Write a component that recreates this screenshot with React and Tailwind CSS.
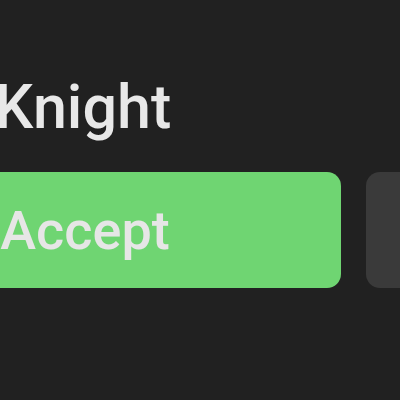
export default function App() {
  return (
    <div className="w-[400px] h-[400px] overflow-hidden bg-[#212121]" style={{ fontFamily: "Roboto, 'Noto Sans', sans-serif" }}>
      <div className="ml-[-171px] w-[1100px] pt-[75px] flex flex-col">
        <div className="w-[508px] text-center text-[61px] leading-[64px] font-medium text-[#e8e8e8]">Knight</div>
        <div className="mt-[33px] flex gap-[25px]">
          <button className="w-[512px] h-[116px] rounded-[14px] bg-[#6fd572] text-[#e6e6e6] text-[54px] font-medium">Accept</button>
          <button className="w-[512px] h-[116px] rounded-[14px] bg-[#3a3a3a] text-[#e6e6e6] text-[54px] font-medium">Decline</button>
        </div>
      </div>
    </div>
  );
}
